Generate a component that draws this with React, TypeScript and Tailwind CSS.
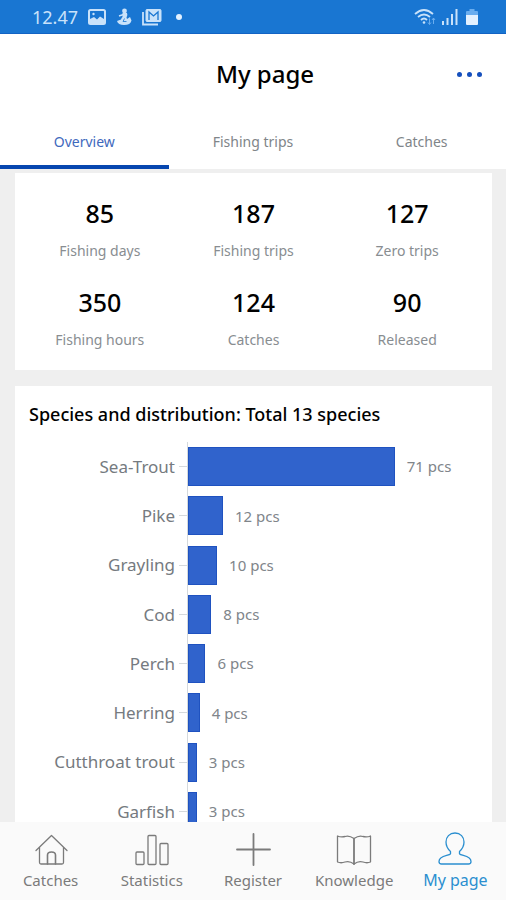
import { useState } from "react";
import type { ReactNode } from "react";
import { clsx } from "clsx";

const TABS = ["Overview", "Fishing trips", "Catches"];

const STATS = [
  { value: 85, label: "Fishing days" },
  { value: 187, label: "Fishing trips" },
  { value: 127, label: "Zero trips" },
  { value: 350, label: "Fishing hours" },
  { value: 124, label: "Catches" },
  { value: 90, label: "Released" },
];

const SPECIES = [
  { name: "Sea-Trout", count: 71 },
  { name: "Pike", count: 12 },
  { name: "Grayling", count: 10 },
  { name: "Cod", count: 8 },
  { name: "Perch", count: 6 },
  { name: "Herring", count: 4 },
  { name: "Cutthroat trout", count: 3 },
  { name: "Garfish", count: 3 },
];

const MAX_COUNT = 71;

function NavIcon({ children }: { children: ReactNode }) {
  return (
    <svg
      viewBox="0 0 36 36"
      className="size-9"
      fill="none"
      stroke="currentColor"
      strokeWidth="1.3"
      strokeLinejoin="round"
      strokeLinecap="round"
      aria-hidden="true"
    >
      {children}
    </svg>
  );
}

const NAV_ITEMS = [
  {
    label: "Catches",
    icon: (
      <NavIcon>
        <path d="M3 18.5 18.5 3.5 34 18.5M6.5 15.5v15q0 1.5 1.5 1.5h21q1.5 0 1.5-1.5v-15" />
        <path d="M14.5 32v-9q0-3 4-3t4 3v9" strokeWidth="1.6" />
      </NavIcon>
    ),
  },
  {
    label: "Statistics",
    icon: (
      <NavIcon>
        <rect x="2" y="20" width="8" height="12.5" rx="1" />
        <rect x="14" y="3.5" width="8" height="29" rx="1" />
        <rect x="26" y="11.5" width="8" height="21" rx="1" />
      </NavIcon>
    ),
  },
  {
    label: "Register",
    icon: (
      <NavIcon>
        <path d="M18.5 2v31M2 17.5h33" strokeWidth="1.8" />
      </NavIcon>
    ),
  },
  {
    label: "Knowledge",
    icon: (
      <NavIcon>
        <path d="M18 6.5Q13 3 9 4.5 5 5.500 1.5 4v26q3.500 1.500 7.500 0 4.500-1.500 9 2 4.500-3.500 9-2 4 1.500 7.500 0V4Q31 5.500 27 4.500 23 3 18 6.5z" />
        <path d="M18 7v25" strokeWidth="1.8" />
      </NavIcon>
    ),
  },
  {
    label: "My page",
    icon: (
      <NavIcon>
        <path d="M18 1c-5.5 0-9 4-9 9 0 4 2.3 7.5 4.500 9.500v2.300C12 24 2 23 2 29.500c0 1.700.8 2.500 2.500 2.500h27c1.700 0 2.500-.8 2.500-2.500C34 23 24 24 22.500 21.800v-2.300C24.700 17.500 27 14 27 10c0-5-3.500-9-9-9z" />
      </NavIcon>
    ),
  },
];

function StatusBar() {
  return (
    <div className="flex h-[34px] shrink-0 items-center justify-between border-b border-[#1263c4] bg-[#1976d2] pr-7 pl-8 text-[#c9e2fa]">
      <div className="flex items-center gap-2.5">
        <span className="text-lg leading-6">12.47</span>
        <svg viewBox="0 0 18 16" className="h-4 w-[18px]" aria-hidden="true">
          <rect x="1" y="1" width="16" height="14" rx="1.5" fill="none" stroke="currentColor" strokeWidth="2" />
          <path d="M2 14V10l4-2 3 2.5 3-3 4 2.500v4z" fill="currentColor" />
          <circle cx="5.5" cy="5" r="1.2" fill="currentColor" />
        </svg>
        <svg viewBox="0 0 16 18" className="h-[18px] w-4" fill="currentColor" aria-hidden="true">
          <circle cx="8.5" cy="3" r="2.4" />
          <path d="M6.5 5h4.5q1 2-.5 4.500l.5 1.500 3-2 1.500 3.500q-1 4.500-7.500 4.500-6 0-7-4l4-1.500q.5-2 1.500-2.500z" />
          <path d="M3 8 7.500 6.500" stroke="currentColor" strokeWidth="1.5" />
          <path d="M8.500 10.500 7 13.500h3.500" stroke="#1976d2" strokeWidth=".8" fill="none" />
        </svg>
        <svg viewBox="0 0 20 18" className="h-[18px] w-5" fill="none" stroke="currentColor" aria-hidden="true">
          <path d="M1 4v12.5h15" strokeWidth="1.8" />
          <rect x="4" y="1.5" width="15" height="12" rx="1" fill="currentColor" />
          <path d="M7 12V4l4.500 4L16 4v8" stroke="#1976d2" strokeWidth="1.3" />
        </svg>
        <span className="ml-1 size-1.5 rounded-full bg-[#e3f1ff]" />
      </div>
      <div className="flex items-center gap-1.5">
        <svg viewBox="0 0 22 18" className="h-[18px] w-[22px]" fill="none" stroke="currentColor" aria-hidden="true">
          <path d="M1 6q9-8 18 0M4 9q6-5 12 0M7 12q3-3 6 0" strokeWidth="1.8" />
          <circle cx="10" cy="14.5" r="1.3" fill="currentColor" stroke="none" />
          <path d="M15.5 10.5v6m-1.5-2 1.500 2 1.500-2M19.500 16v-6M18 12l1.500-2 1.500 2" stroke="#69adef" />
        </svg>
        <svg viewBox="0 0 16 18" className="h-[18px] w-4" fill="currentColor" aria-hidden="true">
          <rect x="0" y="13" width="2" height="4" />
          <rect x="4.5" y="10" width="2" height="7" />
          <rect x="9" y="6" width="2" height="11" />
          <rect x="13.5" y="1" width="2" height="16" />
        </svg>
        <svg viewBox="0 0 12 18" className="ml-0.5 h-[18px] w-3" aria-hidden="true">
          <path d="M3.5 1h5v2H11q1 0 1 1v4H0V4q0-1 1-1h2.5z" fill="#69adef" />
          <path d="M0 7h12v9q0 1-1 1H1q-1 0-1-1z" fill="#e3f1ff" />
        </svg>
      </div>
    </div>
  );
}

function SpeciesChart() {
  return (
    <ul className="mt-4 grid h-[394px] grid-rows-8">
      {SPECIES.map((s) => (
        <li key={s.name} className="flex items-stretch">
          <div className="flex w-[173px] items-center justify-end gap-1 border-r border-[#d5d9dc] text-[17px] text-[#757a80]">
            {s.name}
            <span className="h-px w-2 bg-[#d5d9dc]" />
          </div>
          <div className="flex flex-1 items-center gap-3">
            <div
              className="h-[39px] border border-[#1f52c0] bg-[#3063cc]"
              style={{ width: `${(s.count / MAX_COUNT) * 68}%` }}
            />
            <span className="shrink-0 text-[15px] text-[#80858a]">{s.count} pcs</span>
          </div>
        </li>
      ))}
    </ul>
  );
}

export default function App() {
  const [tab, setTab] = useState("Overview");
  const [page, setPage] = useState("My page");

  return (
    <div className="flex h-screen flex-col overflow-hidden bg-[#efefef] font-['Noto_Sans',sans-serif]">
      <StatusBar />

      <header className="shrink-0 bg-white">
        <div className="grid h-20 grid-cols-[1fr_auto_1fr] items-center pr-6 pl-12">
          <h1 className="col-start-2 text-2xl font-medium text-black">My page</h1>
          <button type="button" aria-label="More options" className="flex gap-[5px] justify-self-end">
            <span className="size-[5px] rounded-full bg-[#1650bd]" />
            <span className="size-[5px] rounded-full bg-[#1650bd]" />
            <span className="size-[5px] rounded-full bg-[#1650bd]" />
          </button>
        </div>

        {/* Tabs */}
        <div role="tablist" className="grid grid-cols-3">
          {TABS.map((item) => (
            <button
              key={item}
              type="button"
              role="tab"
              aria-selected={tab === item}
              onClick={() => setTab(item)}
              className={clsx(
                "h-[55px] border-b-4 pt-1 text-sm",
                tab === item ? "border-[#0646af] text-[#3f69bd]" : "border-white text-[#808589]"
              )}
            >
              {item}
            </button>
          ))}
        </div>
      </header>

      <main className="min-h-0 flex-1 overflow-hidden pt-1 pr-3.5 pl-[15px]">
        <section className="grid grid-cols-3 gap-y-[25px] bg-white px-2 pt-6 pb-5">
          {STATS.map((s) => (
            <div key={s.label} className="flex flex-col items-center gap-3">
              <span className="text-[25px] leading-8 font-medium text-black">{s.value}</span>
              <span className="text-sm text-[#888d91]">{s.label}</span>
            </div>
          ))}
        </section>

        <section className="mt-4 bg-white pt-4">
          <h2 className="px-3.5 text-lg leading-6 font-medium text-black">
            Species and distribution: Total 13 species
          </h2>
          <SpeciesChart />
        </section>
      </main>

      {/* Bottom navigation */}
      <nav className="grid shrink-0 grid-cols-5 bg-[#fafafa] pt-2.5 pb-2">
        {NAV_ITEMS.map((item) => (
          <a
            key={item.label}
            href="#"
            onClick={(e) => { e.preventDefault(); setPage(item.label); }}
            className={clsx(
              "flex flex-col items-center",
              page === item.label ? "text-base leading-6 text-[#2b8fd0]" : "text-[15px] leading-6 text-[#7b7b7b]"
            )}
          >
            {item.icon}
            {item.label}
          </a>
        ))}
      </nav>
    </div>
  );
}
